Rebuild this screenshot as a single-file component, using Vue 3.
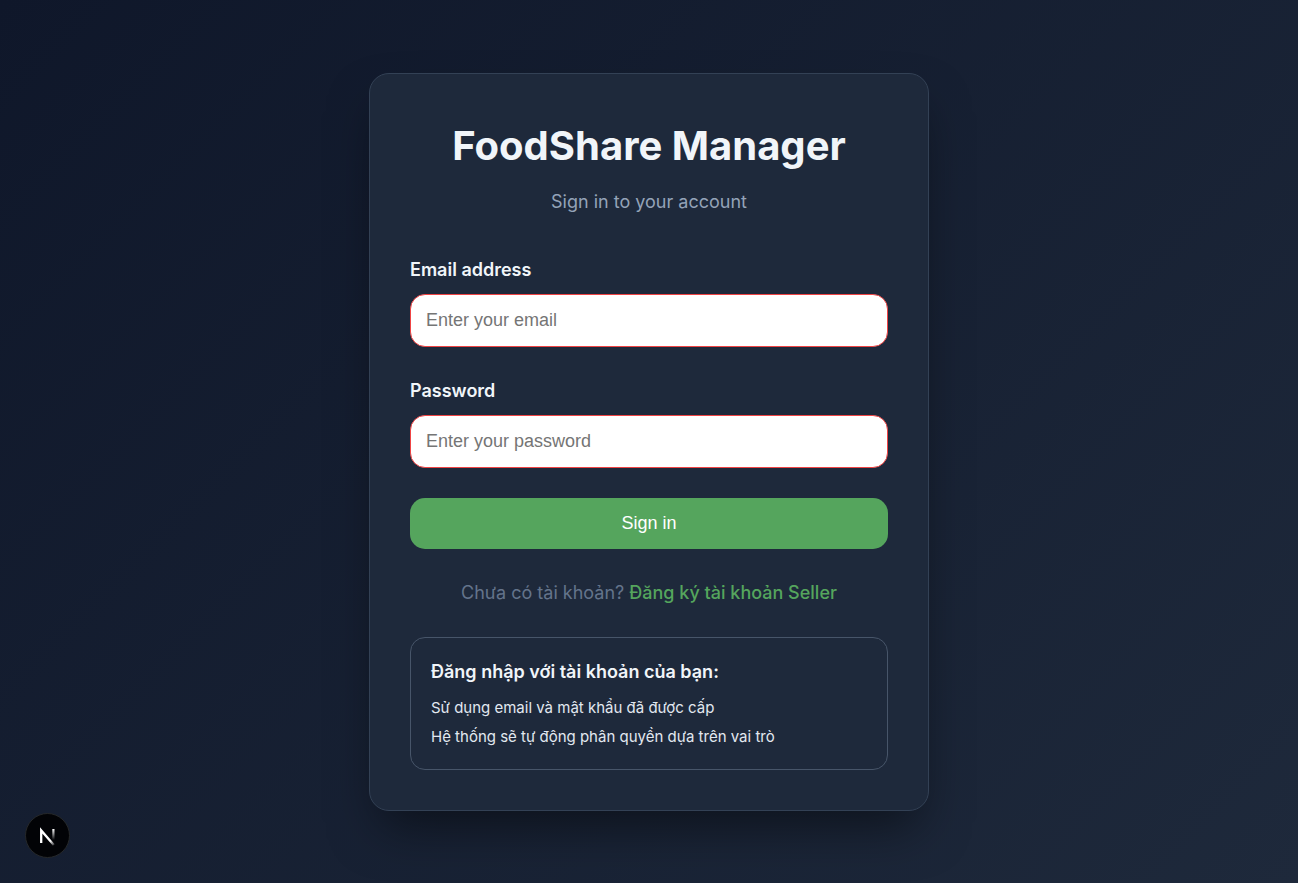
<script setup>
import { ref } from 'vue'

const email = ref('')
const password = ref('')
</script>

<template>
  <main class="page">
    <section class="card">
      <header class="header">
        <h1 class="title">FoodShare Manager</h1>
        <p class="subtitle">Sign in to your account</p>
      </header>

      <form class="form" novalidate @submit.prevent>
        <div class="field">
          <label for="email">Email address</label>
          <input id="email" v-model="email" type="email" placeholder="Enter your email" />
        </div>
        <div class="field">
          <label for="password">Password</label>
          <input id="password" v-model="password" type="password" placeholder="Enter your password" />
        </div>
        <button class="submit" type="submit">Sign in</button>
      </form>

      <p class="register">
        Chưa có tài khoản? <a href="#register">Đăng ký tài khoản Seller</a>
      </p>

      <aside class="info">
        <h2>Đăng nhập với tài khoản của bạn:</h2>
        <p>Sử dụng email và mật khẩu đã được cấp</p>
        <p>Hệ thống sẽ tự động phân quyền dựa trên vai trò</p>
      </aside>
    </section>

    <button class="devtools" type="button" aria-label="Open developer tools">
      <svg width="41" height="41" viewBox="0 0 41 41" fill="none" aria-hidden="true">
        <defs>
          <linearGradient id="stem" x1="26" y1="14" x2="26" y2="25" gradientUnits="userSpaceOnUse">
            <stop stop-color="#fff" />
            <stop offset="1" stop-color="#fff" stop-opacity="0" />
          </linearGradient>
          <linearGradient id="diagonal" x1="21" y1="22" x2="28" y2="31" gradientUnits="userSpaceOnUse">
            <stop stop-color="#fff" />
            <stop offset="0.4" stop-color="#fff" />
            <stop offset="1" stop-color="#fff" stop-opacity="0" />
          </linearGradient>
        </defs>
        <path d="M14.2 28V15.4L26.8 30" stroke="url(#diagonal)" stroke-width="2.3" />
        <path d="M26.4 14V25" stroke="url(#stem)" stroke-width="2.2" />
      </svg>
    </button>
  </main>
</template>

<style>
body {
  margin: 0;
}
</style>

<style scoped>
.page {
  box-sizing: border-box;
  min-height: 100vh;
  display: flex;
  align-items: center;
  justify-content: center;
  padding: 20px;
  background: linear-gradient(135deg, #0f172a 0%, #1e293b 100%);
  color: #f1f5f9;
  font-family: Inter, 'Noto Sans', sans-serif;
  font-size: 18px;
  line-height: 28px;
}

h1,
h2,
p {
  margin: 0;
}

.card {
  box-sizing: border-box;
  width: 100%;
  max-width: 560px;
  padding: 40px;
  border: 1px solid #334155;
  border-radius: 20px;
  background: #1e293b;
  box-shadow: 0 25px 50px -12px rgba(0, 0, 0, 0.5);
}

.header {
  margin-bottom: 40px;
  text-align: center;
}

.title {
  margin-bottom: 10px;
  font-size: 40px;
  font-weight: 700;
  line-height: 64px;
}

.subtitle {
  color: #94a3b8;
}

.form {
  display: flex;
  flex-direction: column;
  gap: 30px;
}

.field {
  display: flex;
  flex-direction: column;
  gap: 10px;
}

.field label {
  font-weight: 600;
}

.field input {
  box-sizing: border-box;
  width: 100%;
  padding: 15px;
  border: 1px solid #ef4444;
  border-radius: 15px;
  outline: none;
  background: #fff;
  color: #0f172a;
  font-family: 'Liberation Sans', Arial, sans-serif;
  font-size: 18px;
  line-height: 21px;
  height: 53px;
}

.field input::placeholder {
  color: #757575;
}

.submit {
  padding: 15px;
  border: 0;
  border-radius: 15px;
  background: #55a55d;
  color: #fff;
  font-family: 'Liberation Sans', Arial, sans-serif;
  font-size: 18px;
  font-weight: 500;
  line-height: 21px;
  cursor: pointer;
}

.register {
  margin: 30px 0;
  color: #64748b;
  text-align: center;
}

.register a {
  color: #55a55d;
  font-weight: 500;
  text-decoration: none;
}

.info {
  padding: 20px;
  border: 1px solid #475569;
  border-radius: 15px;
}

.info h2 {
  margin-bottom: 10px;
  font-size: 18px;
  font-weight: 600;
  line-height: 28px;
}

.info p {
  color: #e2e8f0;
  font-size: 15px;
  line-height: 24px;
}

.info p + p {
  margin-top: 5px;
}

.devtools {
  position: fixed;
  bottom: 25px;
  left: 25px;
  box-sizing: border-box;
  width: 45px;
  height: 45px;
  display: flex;
  align-items: center;
  justify-content: center;
  padding: 0;
  border: 1px solid #262829;
  border-radius: 50%;
  background: #020306;
  cursor: pointer;
}

.devtools svg {
  flex: none;
}
</style>
